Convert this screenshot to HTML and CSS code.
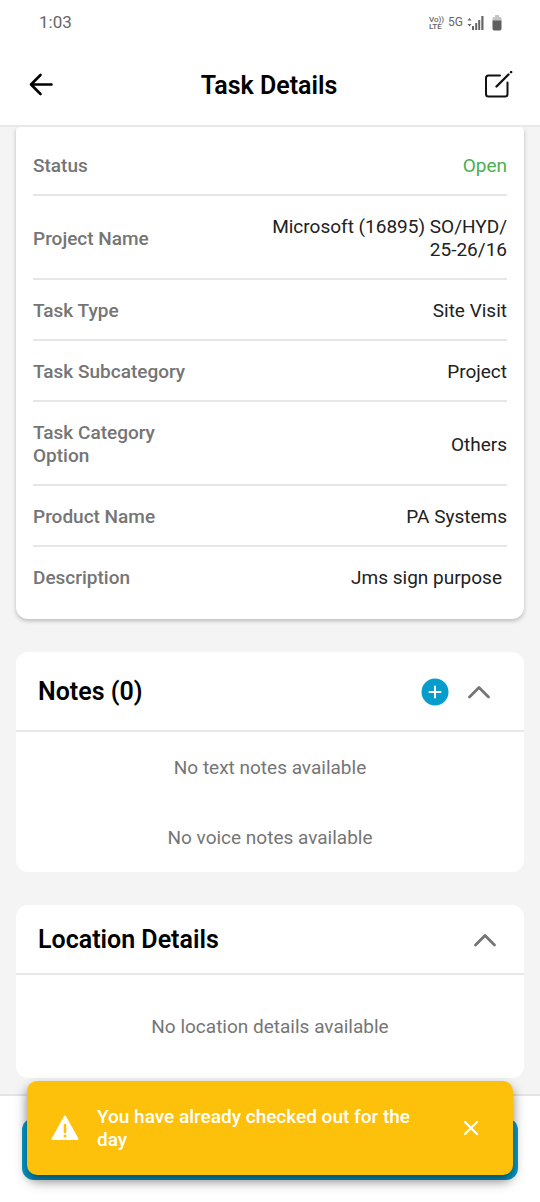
FILE: index.html
```html
<!DOCTYPE html>
<html lang="en">
<head>
<meta charset="utf-8">
<meta name="viewport" content="width=device-width, initial-scale=1">
<title>Task Details</title>
<link rel="stylesheet" href="styles.css">
</head>
<body>
<div class="screen">
  <header class="top">
    <div class="status-bar">
      <span class="clock">1:03</span>
      <div class="indicators">
        <span class="volte"><span>Vo))</span><span>LTE</span></span>
        <span class="network">5G</span>
        <svg width="17" height="16" viewBox="0 0 17 16" fill="#666" aria-hidden="true">
          <path d="M2.500 3 4.500 5.500h-4zM2.500 11.500.5 9h4z"/>
          <path d="M5 11h2v4H5zM8.200 8h2v7h-2zM11.200 5h2v10h-2zM14.300 1h2.200v14h-2.200z"/>
        </svg>
        <svg class="battery" width="10" height="16" viewBox="0 0 10 16" aria-hidden="true">
          <path d="M3 0h4v2h1.500l1 1v3H.5V3l1-1H3z" fill="#c4c4c4"/>
          <path d="M.5 5.500h9V14l-1 1.500h-7L.5 14z" fill="#5f5f5f"/>
        </svg>
      </div>
    </div>
    <div class="nav-bar">
      <button class="icon-button" type="button" aria-label="Back">
        <svg width="24" height="24" viewBox="0 0 24 24" fill="none" stroke="#000" stroke-width="2.600" stroke-linecap="round" stroke-linejoin="round"><path d="M11.500 2 2 11.500 11.500 21M2 11.500h20.500"/></svg>
      </button>
      <h1 class="title">Task Details</h1>
      <button class="icon-button" type="button" aria-label="Edit task">
        <svg width="28" height="28" viewBox="0 0 28 28" fill="none" stroke="#111" stroke-width="2" stroke-linecap="round" stroke-linejoin="round"><path d="M15 4.500H3.500Q1 4.500 1 7v16q0 2.500 2.500 2.500h16.500q2.500 0 2.500-2.500V11.500"/><path d="M11.500 15.500 23.500 3.500" stroke-width="2.300"/><path d="M26 1.200l.2-.2" stroke-width="2.400"/></svg>
      </button>
    </div>
  </header>

  <main class="content">
    <dl class="card details">
      <div class="row"><dt>Status</dt><dd class="open">Open</dd></div>
      <div class="row"><dt>Project Name</dt><dd>Microsoft (16895) SO/HYD/<br>25-26/16</dd></div>
      <div class="row"><dt>Task Type</dt><dd>Site Visit</dd></div>
      <div class="row"><dt>Task Subcategory</dt><dd>Project</dd></div>
      <div class="row"><dt>Task Category Option</dt><dd>Others</dd></div>
      <div class="row"><dt>Product Name</dt><dd>PA Systems</dd></div>
      <div class="row"><dt>Description</dt><dd class="description">Jms sign purpose</dd></div>
    </dl>

    <section class="card">
      <div class="card-head notes-head">
        <h2>Notes (0)</h2>
        <button class="icon-button" type="button" aria-label="Add note">
          <svg width="28" height="28" viewBox="0 0 28 28"><circle cx="14" cy="14" r="13.500" fill="#069dcd"/><path d="M14 8.500v11M8.500 14h11" stroke="#fff" stroke-width="2" stroke-linecap="round"/></svg>
        </button>
        <button class="icon-button" type="button" aria-label="Collapse notes">
          <svg width="24" height="16" viewBox="0 0 24 16" fill="none" stroke="#757575" stroke-width="2.800" stroke-linecap="round" stroke-linejoin="round"><path d="M2.500 13 12 3.500l9.500 9.500"/></svg>
        </button>
      </div>
      <p class="empty">No text notes available</p>
      <p class="empty">No voice notes available</p>
    </section>

    <section class="card">
      <div class="card-head">
        <h2>Location Details</h2>
        <button class="icon-button" type="button" aria-label="Collapse location details">
          <svg width="24" height="16" viewBox="0 0 24 16" fill="none" stroke="#757575" stroke-width="2.800" stroke-linecap="round" stroke-linejoin="round"><path d="M2.500 13 12 3.500l9.500 9.500"/></svg>
        </button>
      </div>
      <p class="empty location-empty">No location details available</p>
    </section>
  </main>

  <footer class="action-bar">
    <button class="action" type="button" aria-label="Check in"></button>
  </footer>

  <div class="toast" role="alert">
    <svg width="28" height="28" viewBox="0 0 28 28" aria-hidden="true"><path d="M14 2.500 26.500 25h-25z" fill="#fff" stroke="#fff" stroke-width="2" stroke-linejoin="round"/><path d="M14 11v7" stroke="#fdc00b" stroke-width="2.600" stroke-linecap="round"/><circle cx="14" cy="22" r="1.500" fill="#fdc00b"/></svg>
    <p>You have already checked out for the day</p>
    <button class="icon-button" type="button" aria-label="Dismiss">
      <svg width="18" height="18" viewBox="0 0 18 18" stroke="#fff" stroke-width="2.300" stroke-linecap="round"><path d="m3 3 12 12M15 3 3 15"/></svg>
    </button>
  </div>
</div>
</body>
</html>
```
FILE: styles.css
```css
* {
  box-sizing: border-box;
}

body,
h1,
h2,
p,
dl,
dd {
  margin: 0;
}

body {
  background: #f4f4f4;
  color: #212121;
  font: 19px/23px Roboto, "Liberation Sans", sans-serif;
}

.screen {
  position: relative;
  display: flex;
  flex-direction: column;
  min-height: 100vh;
}

.top {
  position: relative;
  z-index: 1;
  background: #fff;
  border-bottom: 2px solid #e8e8e8;
}

.status-bar {
  display: flex;
  align-items: center;
  justify-content: space-between;
  height: 45px;
  padding: 0 38px 0 39px;
  color: #666;
}

.clock {
  font-size: 17px;
}

.indicators {
  display: flex;
  align-items: center;
  gap: 4px;
}

.volte {
  display: flex;
  flex-direction: column;
  font-size: 8px;
  font-weight: 500;
  line-height: 7px;
}

.network {
  font-size: 12px;
}

.battery {
  margin-left: 4px;
}

.nav-bar {
  display: flex;
  align-items: center;
  justify-content: space-between;
  height: 80px;
  padding: 0 27px 0 29px;
}

.icon-button {
  display: flex;
  padding: 0;
  border: 0;
  background: none;
  cursor: pointer;
}

.title {
  padding-top: 2px;
  color: #000;
  font-size: 25px;
  font-weight: 600;
  line-height: 30px;
}

.content {
  display: flex;
  flex: 1;
  flex-direction: column;
  gap: 33px;
  padding: 0 16px 16px;
}

.card {
  background: #fff;
  border-radius: 12px;
}

.details {
  padding: 8px 17px 13px;
  border-radius: 4px 4px 12px 12px;
  box-shadow: 0 2px 4px rgba(0, 0, 0, 0.24);
}

.row {
  display: flex;
  align-items: center;
  justify-content: space-between;
  padding: 19px 0 17px;
  border-bottom: 2px solid #e6e6e6;
}

.row:last-child {
  border-bottom: 0;
}

dt {
  max-width: 160px;
  color: #757575;
  font-weight: 500;
}

dd {
  text-align: right;
}

.open {
  color: #4caf50;
}

.description {
  padding-right: 5px;
}

.card-head {
  display: flex;
  align-items: center;
  gap: 18px;
  padding: 19px 27px 18px 22px;
  border-bottom: 2px solid #e8e8e8;
}

.notes-head {
  padding: 24px 33px 23px 22px;
}

h2 {
  flex: 1;
  padding-top: 1px;
  color: #000;
  font-size: 25px;
  font-weight: 600;
  line-height: 30px;
}

.empty {
  padding: 24px 16px 23px;
  color: #757575;
  text-align: center;
}

.location-empty {
  padding: 40px 16px;
}

.action-bar {
  padding: 22px;
  border-top: 2px solid #e4e4e4;
  background: #fff;
}

.action {
  display: block;
  width: 100%;
  height: 62px;
  border: 0;
  border-radius: 12px;
  background: #069dcd;
}

.toast {
  position: absolute;
  right: 27px;
  bottom: 27px;
  left: 27px;
  display: flex;
  align-items: center;
  gap: 18px;
  padding: 24px 33px 24px 24px;
  border-radius: 10px;
  background: #fdc00b;
  box-shadow: 0 6px 12px rgba(0, 0, 0, 0.5);
  color: #fff;
  font-weight: 500;
}

.toast svg {
  flex: none;
}

.toast p {
  flex: 1;
  padding-right: 16px;
}
```
